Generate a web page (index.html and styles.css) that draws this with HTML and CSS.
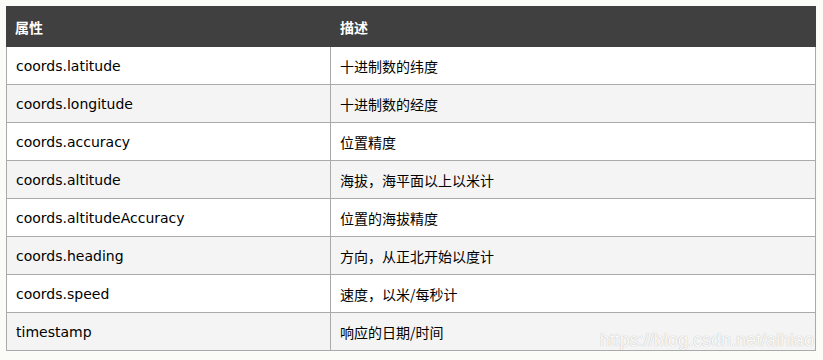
FILE: index.html
```html
<!DOCTYPE html>
<html>
<head>
<meta charset="utf-8">
<title>Geolocation coords</title>
<link rel="stylesheet" href="styles.css">
</head>
<body>
<div class="wrap">
<table class="props">
  <thead>
    <tr><th class="col-name">属性</th><th>描述</th></tr>
  </thead>
  <tbody>
    <tr><td>coords.latitude</td><td>十进制数的纬度</td></tr>
    <tr><td>coords.longitude</td><td>十进制数的经度</td></tr>
    <tr><td>coords.accuracy</td><td>位置精度</td></tr>
    <tr><td>coords.altitude</td><td>海拔，海平面以上以米计</td></tr>
    <tr><td>coords.altitudeAccuracy</td><td>位置的海拔精度</td></tr>
    <tr><td>coords.heading</td><td>方向，从正北开始以度计</td></tr>
    <tr><td>coords.speed</td><td>速度，以米/每秒计</td></tr>
    <tr><td>timestamp</td><td>响应的日期/时间</td></tr>
  </tbody>
</table>
<span class="watermark">https://blog.csdn.net/aihiao</span>
</div>
</body>
</html>
```

FILE: styles.css
```css
body {
	margin: 0;
	padding: 6px;
	background: #fbfbf7;
}
.wrap {
	position: relative;
	width: 811px;
}
.props {
	border-collapse: separate;
	border-spacing: 0;
	table-layout: fixed;
	width: 810px;
	font-family: "DejaVu Sans", "Noto Sans CJK SC", sans-serif;
	font-size: 14px;
	color: #000000;
}
.props th {
	background: #404040;
	color: #ffffff;
	font-weight: bold;
	text-align: left;
	height: 41px;
	padding: 0 0 0 9px;
	font-family: "Noto Sans CJK SC", sans-serif;
	font-size: 14px;
}
.props th.col-name {
	width: 316px;
}
.props td {
	height: 37px;
	padding: 0 0 0 9px;
	border-bottom: 1px solid #aaaaaa;
	border-right: 1px solid #aaaaaa;
	background: #ffffff;
}
.props td:first-child {
	border-left: 1px solid #aaaaaa;
}
.props td + td {
	font-family: "Noto Sans CJK SC", sans-serif;
	font-size: 14px;
}
.props tbody tr:nth-child(even) td {
	background: #f4f4f4;
}
.watermark {
	position: absolute;
	right: 3px;
	bottom: 0;
	font-family: "Liberation Sans", Arial, sans-serif;
	font-size: 18px;
	color: #fafafa;
	text-shadow: 0 0 1px #a8a8a8;
}
```
